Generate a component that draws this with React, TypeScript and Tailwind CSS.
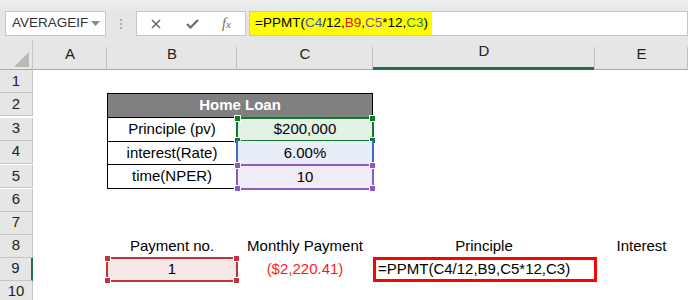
import React from 'react';

const grid = 'grid grid-cols-[33px_74px_130px_136px_222px_93px]';
const font = { fontFamily: '"Liberation Sans", Arial, sans-serif' };

type RefProps = { color: string; squares?: ('tl' | 'tr' | 'bl' | 'br')[]; sides?: string };

function RefBox({ color, squares = [], sides = 'border-2' }: RefProps) {
  const pos: Record<string, string> = {
    tl: '-left-[4px] -top-[4px]',
    tr: '-right-[4px] -top-[4px]',
    bl: '-left-[4px] -bottom-[4px]',
    br: '-right-[4px] -bottom-[4px]',
  };
  return (
    <div className={`pointer-events-none absolute -inset-[1px] ${sides}`} style={{ borderColor: color }}>
      {squares.map((s) => (
        <span
          key={s}
          className={`absolute h-[7px] w-[7px] border border-white ${pos[s]}`}
          style={{ backgroundColor: color }}
        />
      ))}
    </div>
  );
}

function RowHead({ n, active }: { n: number; active?: boolean }) {
  return (
    <div
      className={`flex h-[23px] items-center justify-center border-b border-r border-[#c6c6c6] bg-[#e6e6e6] text-[15px] text-[#222] ${
        active ? 'border-r-2 border-r-[#217346] bg-[#d2d2d2]' : ''
      }`}
    >
      {n}
    </div>
  );
}

export default function App() {
  return (
    <div className="h-[300px] w-[688px] overflow-hidden bg-white" style={font}>
      {/* formula bar */}
      <div className="flex h-[40px] items-start bg-gradient-to-b from-[#f0f0f0] to-[#e6e6e6] to-[30%] pt-[11px]">
        <div className="ml-[5px] flex h-[25px] w-[101px] shrink-0 items-center justify-between border border-[#c6c6c6] bg-white pl-[6px] pr-[5px] text-[13.5px] text-[#333]">
          <span>AVERAGEIF</span>
          <svg width="9" height="5" viewBox="0 0 9 5">
            <path d="M0 0h9L4.5 5z" fill="#8a8a8a" />
          </svg>
        </div>
        <div className="ml-[14px] mt-[8px] flex shrink-0 flex-col gap-[2px]">
          <span className="h-[2px] w-[2px] bg-[#a8a8a8]" />
          <span className="h-[2px] w-[2px] bg-[#a8a8a8]" />
          <span className="h-[2px] w-[2px] bg-[#a8a8a8]" />
        </div>
        <div className="ml-[14px] flex h-[25px] w-[110px] shrink-0 items-center border border-[#c6c6c6] bg-white">
          <svg className="ml-[14px]" width="10" height="10" viewBox="0 0 10 10">
            <path d="M1 1l8 8M9 1l-8 8" stroke="#6b6b6b" strokeWidth="1.6" />
          </svg>
          <svg className="ml-[25px]" width="13" height="10" viewBox="0 0 13 10">
            <path d="M1 5l3.5 3.5L12 1" stroke="#6b6b6b" strokeWidth="2.2" fill="none" />
          </svg>
          <span className="ml-[23px] text-[14px] italic text-[#6b6b6b]" style={{ fontFamily: '"Liberation Serif", serif' }}>
            f<span className="text-[11px]">x</span>
          </span>
        </div>
        <div className="ml-[3px] flex h-[25px] min-w-0 flex-1 items-center border border-[#c6c6c6] bg-white">
          <span className="flex h-full items-center whitespace-nowrap bg-[#ffff00] pl-[5px] pr-[4px] text-[13.5px] text-black">
            =PPMT(<span className="text-[#2f5fc0]">C4</span>/12,<span className="text-[#d0202a]">B9</span>,
            <span className="text-[#7b4fa8]">C5</span>*12,<span className="text-[#148a2c]">C3</span>)
          </span>
        </div>
      </div>

      {/* column headers */}
      <div className={`${grid} h-[30px] border-b border-[#ababab] bg-[#e6e6e6] text-[15px] text-[#222]`}>
        <div className="relative border-r border-[#c6c6c6]">
          <svg className="absolute bottom-[3px] right-[3px]" width="15" height="15" viewBox="0 0 15 15">
            <path d="M15 0v15H0z" fill="#b8b8b8" />
          </svg>
        </div>
        {['A', 'B', 'C', 'D', 'E'].map((c) => (
          <div
            key={c}
            className={`flex items-end justify-center pb-[4px] ${
              c === 'D' ? 'border-b-[3px] border-[#217346] pb-[1px]' : ''
            }`}
          >
            <div className="relative flex h-full w-full items-end justify-center">
              {c}
              <span className="absolute right-0 top-[7px] h-[23px] w-px bg-[#c0c0c0]" />
            </div>
          </div>
        ))}
      </div>

      {/* sheet */}
      <div className={`${grid} text-[15px] text-black`}>
        <RowHead n={1} />
        <div className="col-span-5" />

        <RowHead n={2} />
        <div />
        <div className="col-span-2 flex items-center justify-center border border-black bg-[#808080] font-bold text-white">
          Home Loan
        </div>
        <div className="col-span-2" />

        <RowHead n={3} />
        <div />
        <div className="flex items-center justify-center border-x border-black">Principle (pv)</div>
        <div className="relative flex items-center justify-center bg-[#e4f1e5]">
          $200,000
          <RefBox color="#0f7a2a" squares={['tl', 'tr', 'bl', 'br']} />
        </div>
        <div className="col-span-2" />

        <RowHead n={4} />
        <div />
        <div className="flex items-center justify-center border border-black">interest(Rate)</div>
        <div className="relative flex items-center justify-center bg-[#e8eef8]">
          6.00%
          <RefBox color="#3a6fc8" sides="border-x-2" />
        </div>
        <div className="col-span-2" />

        <RowHead n={5} />
        <div />
        <div className="flex items-center justify-center border-x border-b border-black">time(NPER)</div>
        <div className="relative flex items-center justify-center bg-[#f0ecf7]">
          10
          <RefBox color="#8a5cc0" squares={['tl', 'tr', 'bl', 'br']} />
        </div>
        <div className="col-span-2" />

        <RowHead n={6} />
        <div className="col-span-5" />

        <RowHead n={7} />
        <div className="col-span-5" />

        <RowHead n={8} />
        <div />
        <div className="flex items-center justify-center">Payment no.</div>
        <div className="flex items-center justify-center whitespace-nowrap">Monthly Payment</div>
        <div className="flex items-center justify-center">Principle</div>
        <div className="flex items-center justify-center">Interest</div>

        <RowHead n={9} active />
        <div />
        <div className="relative flex items-center justify-center bg-[#f7e8e8]">
          1
          <RefBox color="#c2343c" squares={['tl', 'tr', 'bl', 'br']} />
        </div>
        <div className="flex items-center justify-center text-[#ff1a1a]">($2,220.41)</div>
        <div className="relative flex items-center">
          <div className="absolute -inset-y-[1px] -right-[2px] left-0 border-[3px] border-[#ff0000]" />
          <span className="pl-[5px]">=PPMT(C4/12,B9,C5*12,C3)</span>
        </div>
        <div />

        <RowHead n={10} />
        <div className="col-span-5" />
      </div>
    </div>
  );
}
